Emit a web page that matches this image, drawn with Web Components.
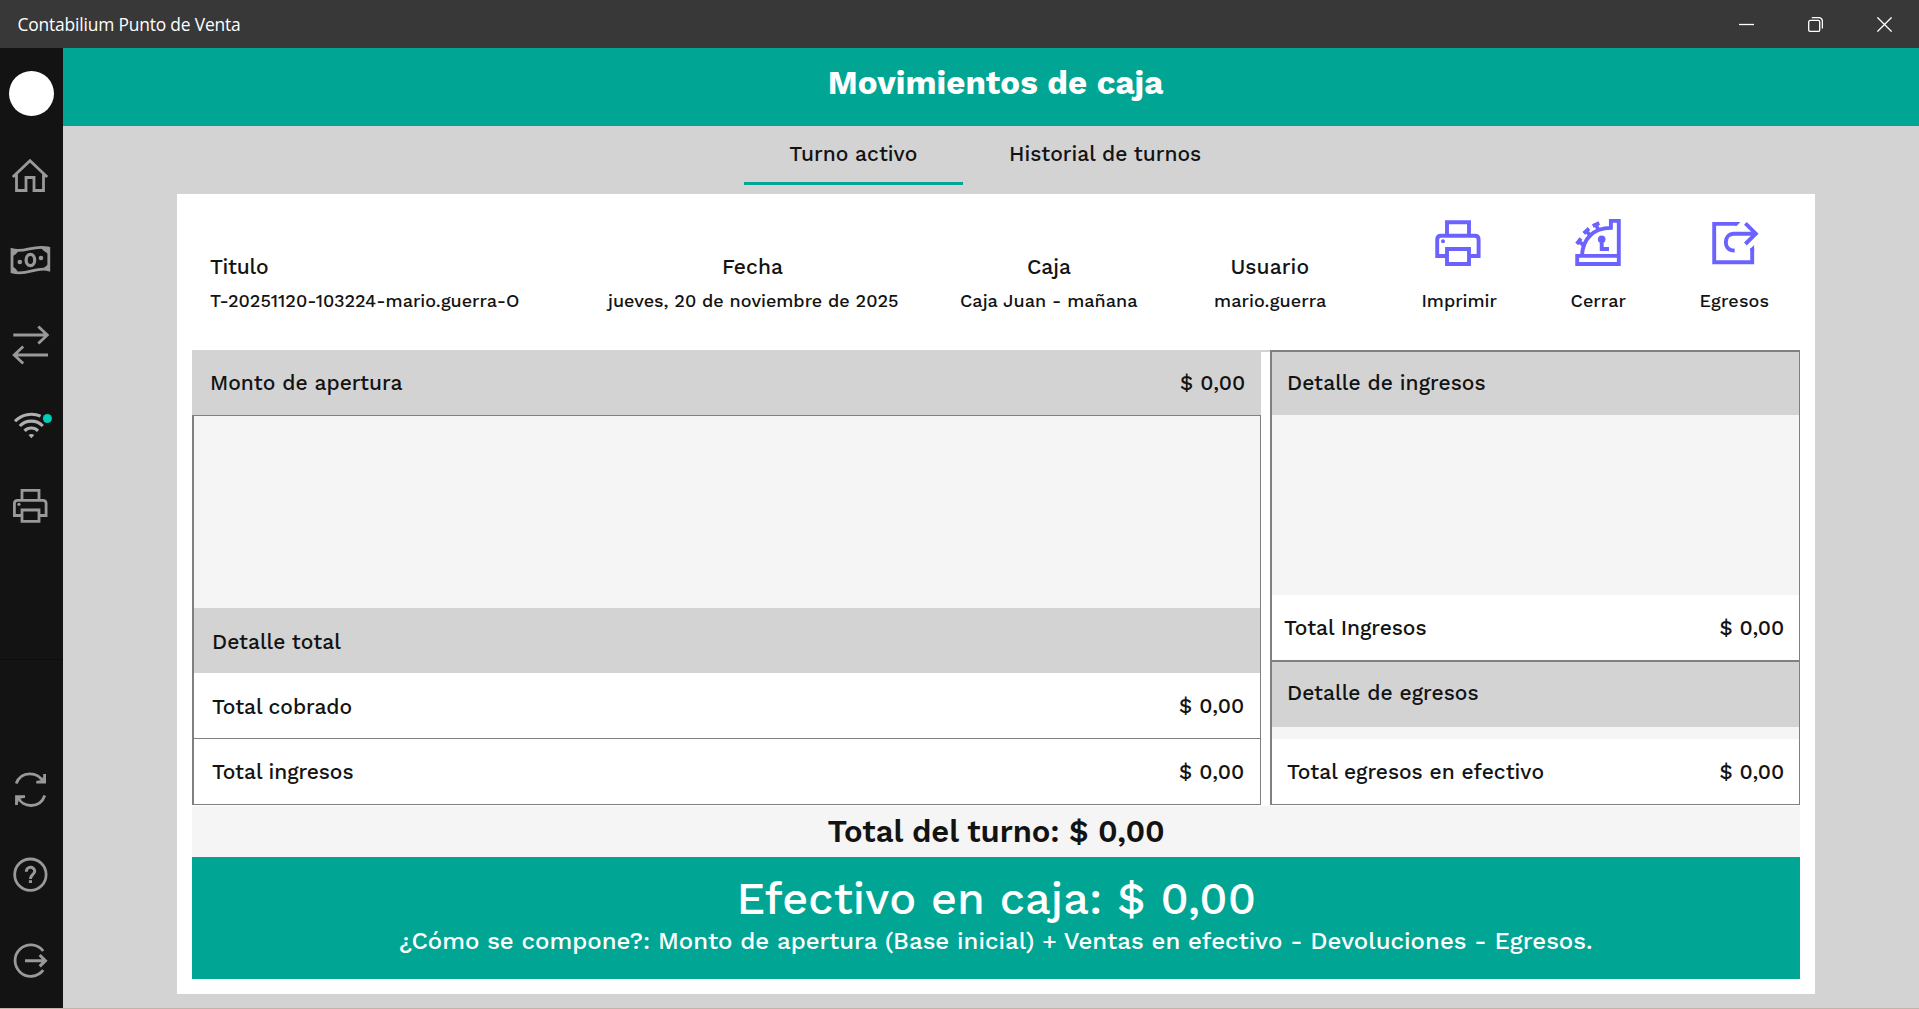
<!DOCTYPE html>
<html lang="es">
<head>
<meta charset="utf-8">
<title>Contabilium Punto de Venta</title>
<style>
  body {
    margin: 0;
    width: 1919px;
    height: 1009px;
    overflow: hidden;
    background: #d3d3d3;
    color: #131313;
    font-family: "Work Sans", Inter, sans-serif;
    --teal: #00a693;
    --gray: #d3d3d3;
    --soft: #f5f5f5;
    --line: #808080;
    --purple: #6c63ff;
  }
</style>
</head>
<body>
<pos-window>
  <fit-text slot="title" family="Open Sans" size="17.4" weight="400" width="221.5">Contabilium Punto de Venta</fit-text>
  <pos-sidebar slot="side"></pos-sidebar>

  <page-header><fit-text size="33" weight="700" width="333.5" line="39">Movimientos de caja</fit-text></page-header>

  <tab-bar>
    <tab-item active style="width: 219px"><fit-text width="127.5" style="margin-right: 1px">Turno activo</fit-text></tab-item>
    <tab-item style="width: 287px"><fit-text width="191">Historial de turnos</fit-text></tab-item>
  </tab-bar>

  <shift-card>
    <shift-info slot="info">
      <info-field start style="width: 308px">
        <fit-text slot="label" width="58">Titulo</fit-text>
        <fit-text size="18" width="309">T-20251120-103224-mario.guerra-O</fit-text>
      </info-field>
      <info-field style="margin-left: 88px">
        <fit-text slot="label" width="59" style="margin-left: 3px">Fecha</fit-text>
        <fit-text size="18" width="292">jueves, 20 de noviembre de 2025</fit-text>
      </info-field>
      <info-field style="margin-left: 63px">
        <fit-text slot="label" width="43">Caja</fit-text>
        <fit-text size="18" width="177">Caja Juan - mañana</fit-text>
      </info-field>
      <info-field style="margin-left: 77px">
        <fit-text slot="label" width="77" style="margin-right: 1px">Usuario</fit-text>
        <fit-text size="18" width="111">mario.guerra</fit-text>
      </info-field>
      <action-button icon="print" style="margin-left: 96.5px"><fit-text size="18" width="75">Imprimir</fit-text></action-button>
      <action-button icon="close" style="margin-left: 74px"><fit-text size="18" width="55">Cerrar</fit-text></action-button>
      <action-button icon="out" style="margin-left: 74px"><fit-text size="18" width="68">Egresos</fit-text></action-button>
    </shift-info>

    <total-row slot="left" header style="padding: 0 17px 0 20px">
      <fit-text width="190.5">Monto de apertura</fit-text>
      <fit-text slot="amount" width="64">$ 0,00</fit-text>
    </total-row>
    <detail-box slot="left">
      <empty-list style="height: 192px"></empty-list>
      <total-row header style="padding-left: 20px"><fit-text width="127.5" style="margin-top: 2px">Detalle total</fit-text></total-row>
      <total-row>
        <fit-text width="140" style="margin-top: 2px">Total cobrado</fit-text>
        <fit-text slot="amount" width="64">$ 0,00</fit-text>
      </total-row>
      <total-row lined>
        <fit-text width="142">Total ingresos</fit-text>
        <fit-text slot="amount" width="64">$ 0,00</fit-text>
      </total-row>
    </detail-box>

    <detail-box slot="right" thick>
      <total-row header style="height: 63px; padding-left: 17px"><fit-text width="196.5" style="margin-bottom: 2px">Detalle de ingresos</fit-text></total-row>
      <empty-list style="height: 180px"></empty-list>
      <total-row style="padding: 0 16px 0 12px">
        <fit-text width="143">Total Ingresos</fit-text>
        <fit-text slot="amount" width="63.5">$ 0,00</fit-text>
      </total-row>
      <total-row header style="border-top: 2px solid var(--line); padding-left: 17px"><fit-text width="189.5" style="margin-bottom: 4px">Detalle de egresos</fit-text></total-row>
      <empty-list style="height: 12px"></empty-list>
      <total-row style="padding: 0 16px 0 15px">
        <fit-text width="257">Total egresos en efectivo</fit-text>
        <fit-text slot="amount" width="63.5">$ 0,00</fit-text>
      </total-row>
    </detail-box>

    <shift-total slot="foot"><fit-text size="31" weight="600" width="338" line="39" style="margin-left: 1px">Total del turno: $ 0,00</fit-text></shift-total>
    <cash-banner slot="foot">
      <fit-text size="45" width="513" line="47" style="margin-left: 2px">Efectivo en caja: $ 0,00</fit-text>
      <fit-text size="24" width="1193" line="30" style="margin-left: 1px">¿Cómo se compone?: Monto de apertura (Base inicial) + Ventas en efectivo - Devoluciones - Egresos.</fit-text>
    </cash-banner>
  </shift-card>
</pos-window>

<script>
// Attaches an open shadow root with the given markup
class BaseElement extends HTMLElement {
  constructor() {
    super();
    this.root = this.attachShadow({mode: 'open'});
    this.root.innerHTML = this.render();
  }

  render() {
    return '<slot></slot>';
  }
}

// One line of text, tracked so that its ink fills the given width
class FitText extends HTMLElement {
  constructor() {
    super();
    this.root = this.attachShadow({mode: 'open'});
  }

  connectedCallback() {
    const size = this.getAttribute('size') || '21';
    const weight = this.getAttribute('weight') || '500';
    const line = this.getAttribute('line') || '24';
    const name = this.getAttribute('family');
    const family = name ? `"${name}", sans-serif` : '"Work Sans", Inter, sans-serif';
    const width = Number(this.getAttribute('width'));
    const text = this.textContent;

    const ctx = document.createElement('canvas').getContext('2d');
    ctx.font = `${weight} ${size}px ${family}`;
    const box = ctx.measureText(text);
    const ink = box.actualBoundingBoxLeft + box.actualBoundingBoxRight;
    const gap = (width - ink) / (text.length - 1);

    this.root.innerHTML = `
      <style>
        :host {
          display: block;
          flex: none;
          width: ${width}px;
          font: ${weight} ${size}px/${line}px ${family};
          letter-spacing: ${gap.toFixed(3)}px;
          text-indent: ${box.actualBoundingBoxLeft.toFixed(2)}px;
          text-align: left;
          white-space: nowrap;
        }
      </style>
      <slot></slot>`;
  }
}

class PosWindow extends BaseElement {
  render() {
    return `
      <style>
        :host { display: flex; flex-direction: column; height: 1009px; }
        .bar {
          display: flex;
          align-items: center;
          height: 48px;
          padding: 0 27px 0 18.5px;
          background: #383838;
          color: #fff;
        }
        .buttons { display: flex; gap: 54px; margin-left: auto; }
        .buttons svg { display: block; fill: none; stroke: #fff; stroke-width: 1.3; }
        .body { display: flex; height: 960px; }
        main { flex: 1; }
        footer { height: 1px; background: #c0b5aa; }
      </style>
      <div class="bar">
        <slot name="title"></slot>
        <div class="buttons">
          <svg width="15" height="15"><path d="M0 7.5H15"/></svg>
          <svg width="15" height="15"><rect x=".7" y="3.4" width="11" height="11" rx="1.5"/><path d="M3.8 .7H11a3.4 3.4 0 0 1 3.4 3.4V11.4"/></svg>
          <svg width="15" height="15"><path d="M.4 .4 14.6 14.6M14.6 .4 .4 14.6"/></svg>
        </div>
      </div>
      <div class="body">
        <slot name="side"></slot>
        <main><slot></slot></main>
      </div>
      <footer></footer>`;
  }
}

class PosSidebar extends BaseElement {
  render() {
    return `
      <style>
        :host {
          display: flex;
          flex-direction: column;
          flex: none;
          box-sizing: border-box;
          width: 63px;
          height: 960px;
          padding: 23px 0 7px;
          background: #131313;
        }
        .avatar { width: 45px; height: 45px; margin: 0 9px 20px; border-radius: 50%; background: #fff; }
        svg { display: block; flex: none; width: 63px; height: 80px; fill: none; stroke: #999; stroke-width: 2.8; }
        .solid { fill: #999; stroke: none; }
        hr { width: 63px; height: 1px; margin: 113px 0 0; border: 0; background: #100c10; }
        .push { margin-top: auto; }
      </style>
      <div class="avatar"></div>
      <svg viewBox="0 -40 63 80"><path d="M12.8 .9 30 -15.3 47.2 .9M16.5 -1.5V14.5H26V1.5H34V14.5H43.5V-1.5"/></svg>
      <svg viewBox="0 -40 63 80" style="margin-top: 4px">
        <path d="M12 -10.3C25 -6.5 34 -16 48.8 -11.8V9.8C36 6 27 16.5 12 12Z"/>
        <path class="solid" d="M11 -11 18.5 -9 16 -6 12 -3.5ZM49 -12 41 -12 44 -9 49 -5.5ZM11 12 18.5 13 16 9 12 6ZM49 10 41 9.5 45 7 49 3.5Z"/>
        <ellipse cx="30.4" cy="0" rx="4.3" ry="5.6" stroke-width="3.2"/>
        <circle class="solid" cx="19.8" cy="2" r="2.3"/><circle class="solid" cx="41" cy="-2" r="2.3"/>
      </svg>
      <svg viewBox="0 -40 63 80" style="margin-top: 5px"><path d="M13.3 -10H47.5M38.3 -18.5 47.3 -10 38.3 -1.5M48 10H14M23.2 1.5 14.2 10 23.2 18.5"/></svg>
      <svg viewBox="0 -40 63 80">
        <g stroke="#b0b0b0" stroke-width="3.1"><path d="M15 -3.7A22.8 22.8 0 0 1 40.6 -8.8M19.8 1A16 16 0 0 1 42.8 1M24.6 5.9A9.3 9.3 0 0 1 38 5.9"/></g>
        <path d="M28.5 10Q31.4 8 34.3 10L31.4 13.2Z" fill="#b0b0b0" stroke="none"/>
        <circle cx="47.4" cy="-6.5" r="4.5" fill="#00cfb8" stroke="none"/>
      </svg>
      <svg viewBox="0 -40 63 80" style="margin-top: 1px">
        <path d="M22 -6V-15.6H39V-6M22 9.5H14.4V-2.5Q14.4 -5.7 17.6 -5.7H42.9Q46.1 -5.7 46.1 -2.5V9.5H39M22 4H39V15.4H22Z"/>
        <circle class="solid" cx="19" cy="-1.7" r="1.6"/>
      </svg>
      <hr>
      <svg class="push" viewBox="0 -40 63 80">
        <path d="M16.2 -6.5C21 -19.5 38.5 -19 43.5 -7.5M44.6 -16V-7.8H36.3M44.8 5.5C40 18.8 22.5 18.5 17.5 6.5M16.5 15V6.7H25"/>
        <path class="solid" d="M37 -8 45 -15V-8ZM24 7 16.5 14V7Z" opacity=".5"/>
      </svg>
      <svg viewBox="0 -40 63 80" style="margin-top: 5px">
        <circle cx="30.4" cy="-.3" r="15.7"/>
        <path d="M26.3 -3.3C26.3 -9.3 34.7 -9 34.7 -3.7C34.7 -.5 30.5 -.5 30.5 4" stroke-width="3"/><path class="solid" d="M28.9 5.2H32V8H28.9Z"/>
      </svg>
      <svg viewBox="0 -40 63 80" style="margin-top: 6px">
        <path d="M43.2 -10A15.7 15.7 0 1 0 43.2 9.2"/><path d="M25 -.3H45.5M39.7 -6 45.4 -.3 39.7 5.4" stroke-width="3.1"/>
      </svg>`;
  }
}

class PageHeader extends BaseElement {
  render() {
    return `
      <style>
        :host {
          display: flex;
          justify-content: center;
          box-sizing: border-box;
          height: 78px;
          padding: 15px 0 0 11px;
          background: var(--teal);
          color: #fff;
        }
      </style>
      <slot></slot>`;
  }
}

class TabBar extends BaseElement {
  render() {
    return `
      <style>
        :host { display: flex; height: 68px; padding-left: 681px; background: var(--gray); }
      </style>
      <slot></slot>`;
  }
}

class TabItem extends BaseElement {
  render() {
    return `
      <style>
        :host {
          display: flex;
          justify-content: center;
          box-sizing: border-box;
          height: 59px;
          padding-top: 16px;
          border-bottom: 3px solid transparent;
        }
        :host([active]) { border-bottom-color: var(--teal); }
      </style>
      <slot></slot>`;
  }
}

class ShiftCard extends BaseElement {
  render() {
    return `
      <style>
        :host {
          display: block;
          box-sizing: border-box;
          width: 1638px;
          height: 800px;
          margin-left: 114px;
          padding: 0 15px;
          background: #fff;
        }
        .tables {
          display: grid;
          grid-template-columns: 1069px 530px;
          gap: 9px;
          height: 456px;
          background: linear-gradient(var(--gray) 2px, #fff 2px);
        }
      </style>
      <slot name="info"></slot>
      <div class="tables">
        <div><slot name="left"></slot></div>
        <div><slot name="right"></slot></div>
      </div>
      <slot name="foot"></slot>`;
  }
}

class ShiftInfo extends BaseElement {
  render() {
    return `
      <style>
        :host {
          display: flex;
          align-items: flex-end;
          box-sizing: border-box;
          height: 156px;
          padding: 0 0 37px 18px;
        }
      </style>
      <slot></slot>`;
  }
}

class InfoField extends BaseElement {
  render() {
    return `
      <style>
        :host { display: flex; flex-direction: column; align-items: center; gap: 10px; }
        :host([start]) { align-items: flex-start; }
      </style>
      <slot name="label"></slot>
      <slot></slot>`;
  }
}

const ACTION_ICONS = {
  print: `
    <svg width="46" height="48" style="margin-right: 4px">
      <path d="M12 16V3.2H34V16M12 37H2.2V20.5Q2.2 16.7 6 16.7H40Q43.6 16.7 43.6 20.5V37H34M12 30H34V45H12Z"/>
      <circle cx="8" cy="22.3" r="2" class="solid"/>
    </svg>`,
  close: `
    <svg width="46" height="48" style="margin-right: 3px">
      <path d="M2.2 36.9H43.8V45H2.2ZM7 36C8 20 18 9 35.9 8.9V1.9H43.8V36.5"/>
      <circle cx="26.7" cy="20.2" r="3.8" class="solid"/>
      <path d="M26.7 20V30H34"/>
      <path d="M1.7 25 6 19.5M4 22.5 9 26.5M8.7 14.3 14 9.5M11.5 12.2 16 17.5M17.7 7 24.3 4M21 5.5 23.5 11.5" stroke-width="3.8"/>
    </svg>`,
  out: `
    <svg width="47" height="48" style="margin-left: 2px">
      <path d="M25 4.9H2.2V43.2H40.2V29"/>
      <path d="M28.4 3 24.8 6.8H23V3ZM42.1 26V32H38.3V29.8Z" class="solid"/>
      <path d="M22.7 31.6C16 31.6 13.8 27.5 13.8 23.2C13.8 18 17 14.7 22 14.7H43.5M33.4 4.4 43.8 14.7 33.4 25"/>
    </svg>`
};

class ActionButton extends BaseElement {
  render() {
    return `
      <style>
        :host { display: flex; flex-direction: column; align-items: center; gap: 22px; }
        svg { display: block; fill: none; stroke: var(--purple); stroke-width: 3.9; }
        .solid { fill: var(--purple); stroke: none; }
      </style>
      <span></span>
      <slot></slot>`;
  }

  connectedCallback() {
    this.root.querySelector('span').innerHTML = ACTION_ICONS[this.getAttribute('icon')];
  }
}

class DetailBox extends BaseElement {
  render() {
    return `
      <style>
        :host {
          display: block;
          border: 1px solid var(--line);
          border-left-width: 2px;
        }
        :host([thick]) { border-top-width: 2px; }
      </style>
      <slot></slot>`;
  }
}

class EmptyList extends BaseElement {
  render() {
    return `
      <style>
        :host { display: block; background: var(--soft); }
      </style>`;
  }
}

class TotalRow extends BaseElement {
  render() {
    return `
      <style>
        :host {
          display: flex;
          align-items: center;
          justify-content: space-between;
          height: 65px;
          padding: 0 17px 0 18px;
          background: #fff;
        }
        :host([header]) { background: var(--gray); }
        :host([lined]) { border-top: 1px solid var(--line); }
      </style>
      <slot></slot>
      <slot name="amount"></slot>`;
  }
}

class ShiftTotal extends BaseElement {
  render() {
    return `
      <style>
        :host { display: flex; align-items: center; justify-content: center; height: 51px; background: var(--soft); }
      </style>
      <slot></slot>`;
  }
}

class CashBanner extends BaseElement {
  render() {
    return `
      <style>
        :host {
          display: flex;
          flex-direction: column;
          align-items: center;
          gap: 4px;
          box-sizing: border-box;
          height: 122px;
          padding: 18px 0 0;
          background: var(--teal);
          color: #fff;
        }
      </style>
      <slot></slot>`;
  }
}

customElements.define('fit-text', FitText);
customElements.define('pos-window', PosWindow);
customElements.define('pos-sidebar', PosSidebar);
customElements.define('page-header', PageHeader);
customElements.define('tab-bar', TabBar);
customElements.define('tab-item', TabItem);
customElements.define('shift-card', ShiftCard);
customElements.define('shift-info', ShiftInfo);
customElements.define('info-field', InfoField);
customElements.define('action-button', ActionButton);
customElements.define('detail-box', DetailBox);
customElements.define('empty-list', EmptyList);
customElements.define('total-row', TotalRow);
customElements.define('shift-total', ShiftTotal);
customElements.define('cash-banner', CashBanner);
</script>
</body>
</html>
